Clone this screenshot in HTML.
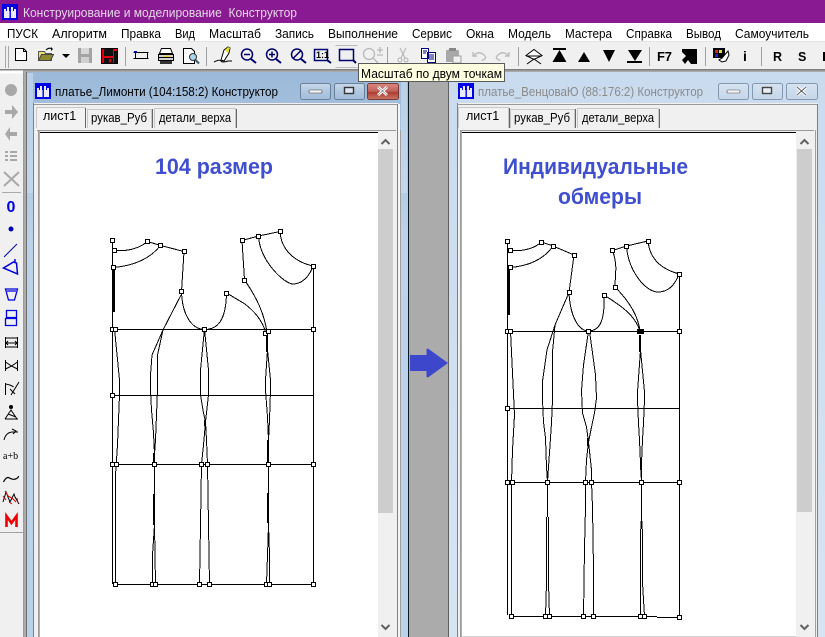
<!DOCTYPE html>
<html><head><meta charset="utf-8"><title>Конструктор</title>
<style>
html,body{margin:0;padding:0;background:#ababab;width:825px;height:637px;overflow:hidden}
svg{display:block;position:absolute;left:0;top:0}
text{font-family:"Liberation Sans","DejaVu Sans",sans-serif;font-size:12.5px;fill:#000}
.h{font-size:22px;font-weight:bold;fill:#3f4fcf}
.g{fill:#8a8a8a}
.p{fill:none;stroke:#000;stroke-width:1}
.sq rect{fill:#fff;stroke:#000;stroke-width:1}
</style></head><body>
<svg width="825" height="637" viewBox="0 0 825 637" xmlns="http://www.w3.org/2000/svg">
<defs>
<linearGradient id="w1" x1="0" y1="0" x2="0" y2="1"><stop offset="0" stop-color="#9cb9d9"/><stop offset=".3" stop-color="#bdd3ea"/><stop offset="1" stop-color="#b9d1ea"/></linearGradient>
<linearGradient id="w2" x1="0" y1="0" x2="0" y2="1"><stop offset="0" stop-color="#c9dbee"/><stop offset="1" stop-color="#d7e4f2"/></linearGradient>
<linearGradient id="rb" x1="0" y1="0" x2="0" y2="1"><stop offset="0" stop-color="#d98a80"/><stop offset=".5" stop-color="#c0605a"/><stop offset=".55" stop-color="#b03c30"/><stop offset="1" stop-color="#c87868"/></linearGradient>
<linearGradient id="bb" x1="0" y1="0" x2="0" y2="1"><stop offset="0" stop-color="#c8d9eb"/><stop offset=".5" stop-color="#b0c7df"/><stop offset="1" stop-color="#a4bedb"/></linearGradient>
<linearGradient id="bc" x1="0" y1="0" x2="0" y2="1"><stop offset="0" stop-color="#d6e3f0"/><stop offset="1" stop-color="#c4d6e9"/></linearGradient>
<g id="app"><rect width="16" height="16" fill="#0000e6"/><path d="M2 14V5h2v2h1V3h2v4h2V3h2v4h1V5h2v9z" fill="#fff" opacity=".92"/><rect x="7.500" y="6" width="1.400" height="8" fill="#0000e6"/></g>
<path id="upa" d="M-4 3L0 -1L4 3" fill="none" stroke="#606060" stroke-width="2"/>
</defs>

<!-- base -->
<rect width="825" height="637" fill="#ababab"/>
<!-- title -->
<rect width="825" height="23" fill="#8a1a92"/>
<use href="#app" x="2" y="4"/>
<text x="23" y="17" style="fill:#e4d6e6" textLength="274" lengthAdjust="spacingAndGlyphs">Конструирование и моделирование&#160;&#160;Конструктор</text>
<!-- menu -->
<rect y="23" width="825" height="18" fill="#fff"/>
<g>
<text x="7" y="38" textLength="31" lengthAdjust="spacingAndGlyphs">ПУСК</text>
<text x="52" y="38" textLength="55" lengthAdjust="spacingAndGlyphs">Алгоритм</text>
<text x="121" y="38" textLength="40" lengthAdjust="spacingAndGlyphs">Правка</text>
<text x="175" y="38" textLength="20" lengthAdjust="spacingAndGlyphs">Вид</text>
<text x="209" y="38" textLength="52" lengthAdjust="spacingAndGlyphs">Масштаб</text>
<text x="275" y="38" textLength="39" lengthAdjust="spacingAndGlyphs">Запись</text>
<text x="328" y="38" textLength="70" lengthAdjust="spacingAndGlyphs">Выполнение</text>
<text x="412" y="38" textLength="40" lengthAdjust="spacingAndGlyphs">Сервис</text>
<text x="466" y="38" textLength="28" lengthAdjust="spacingAndGlyphs">Окна</text>
<text x="508" y="38" textLength="43" lengthAdjust="spacingAndGlyphs">Модель</text>
<text x="565" y="38" textLength="47" lengthAdjust="spacingAndGlyphs">Мастера</text>
<text x="626" y="38" textLength="46" lengthAdjust="spacingAndGlyphs">Справка</text>
<text x="686" y="38" textLength="35" lengthAdjust="spacingAndGlyphs">Вывод</text>
<text x="735" y="38" textLength="74" lengthAdjust="spacingAndGlyphs">Самоучитель</text>
</g>
<!-- toolbar -->
<rect y="41" width="825" height="28" fill="#f0f0f0"/>
<rect y="41" width="825" height="1" fill="#e4e4e4"/>
<rect y="69" width="825" height="1.500" fill="#808080"/>
<rect x="5" y="46" width="1" height="22" fill="#a8a8a8"/><rect x="8" y="46" width="1" height="22" fill="#a8a8a8"/>
<g fill="#a0a0a0"><rect x="125" y="47" width="1" height="19"/><rect x="206" y="47" width="1" height="19"/><rect x="387" y="47" width="1" height="19"/><rect x="518" y="47" width="1" height="19"/><rect x="649" y="47" width="1" height="19"/><rect x="705" y="47" width="1" height="19"/><rect x="761" y="47" width="1" height="19"/></g>
<!-- new -->
<path d="M15.500 48.500h8l3 3v9h-11z" fill="#fff" stroke="#000"/><path d="M23.500 48.500v3h3" fill="none" stroke="#000"/>
<!-- open -->
<path d="M38.500 51.500h6l1 2h6v7h-13z" fill="#e8e070" stroke="#555"/><path d="M38.500 60.500l3-6h12l-3 6z" fill="#8f8a30" stroke="#444"/><path d="M46 50q3-3 6-1" fill="none" stroke="#000"/><path d="M51 47l2 2-2 2z"/>
<path d="M62 54h8l-4 4z" fill="#000"/>
<!-- save disabled -->
<rect x="78" y="48" width="14" height="15" fill="#a4a4a4"/><rect x="81" y="48" width="8" height="6" fill="#d8d8d8"/><rect x="81" y="57" width="8" height="6" fill="#d0d0d0"/>
<!-- save red -->
<rect x="101.500" y="48.500" width="16" height="15" fill="#e00010" stroke="#000"/><rect x="104" y="49" width="9" height="7" fill="#111"/><rect x="104" y="58" width="9" height="5.500" fill="#111"/><rect x="109" y="59" width="2" height="3.500" fill="#d00"/><rect x="114" y="51" width="3" height="12" fill="#111"/>
<!-- page layout -->
<path d="M133.500 52.500h15M135.500 52.500v6M147.500 52.500v6M133.500 58.500h15" fill="none" stroke="#000"/><rect x="134" y="51" width="3" height="1.500" fill="#00c"/><rect x="136" y="54" width="11" height="4" fill="#f0f0f0"/>
<!-- printer -->
<path d="M161.500 48.500h9l2 5h-13z" fill="#fff" stroke="#000"/><path d="M158.500 54.500h15v6h-15z" fill="#d0d0d0" stroke="#000"/><path d="M158.500 57.500h15" stroke="#000"/><rect x="163" y="55.500" width="6" height="1.500" fill="#e8d040"/><path d="M160 61h12v3h-12z" fill="#333"/>
<!-- preview -->
<path d="M183.500 48.500h8l3 3v12h-11z" fill="#fff" stroke="#000"/><circle cx="193" cy="57" r="3.500" fill="#a8d8e8" stroke="#333"/><path d="M195.500 60l3.500 3.500" stroke="#405a70" stroke-width="2"/>
<!-- pen -->
<path d="M221 60l3-10 4-3 2 1-1 5-5 8z" fill="#fff" stroke="#000"/><path d="M225 50l3-3 2 1-2 5z" fill="#e8e020"/><path d="M214 62q6-3 7-1t7 0h4" fill="none" stroke="#000"/>
<!-- zooms -->
<g fill="none" stroke="#00006e" stroke-width="1.500">
<circle cx="247" cy="54.500" r="5.500"/><path d="M244 54.500h6"/>
<circle cx="272" cy="54.500" r="5.500"/><path d="M269 54.500h6M272 51.500v6"/>
<circle cx="297" cy="54.500" r="5.500"/><path d="M293 58.500l8-8"/>
<rect x="314.500" y="49.500" width="13" height="11"/>
<rect x="339.500" y="49.500" width="14" height="11"/>
</g>
<g fill="none" stroke="#00006e" stroke-width="2"><path d="M251 59l5 4M276 59l5 4M301 59l5 4M327 60l4 3M353 60l3 3"/></g>
<text x="316" y="58" style="font-size:9px;font-weight:bold;fill:#000">1:1</text>
<path d="M335.500 45.500h22M335.500 67.500h22" stroke="#bbb" fill="none"/>
<g fill="none" stroke="#b8b8b8" stroke-width="1.300"><circle cx="369" cy="54" r="5.500"/><path d="M373 58l5 5M377 50h6M380 47v6M377 55h6"/></g>
<!-- scissors -->
<g fill="none" stroke="#b0b0b0"><path d="M400 48l5 10M406 48l-5 10"/><circle cx="400" cy="60" r="2"/><circle cx="406" cy="60" r="2"/></g>
<!-- copy -->
<path d="M421.500 48.500h7v10h-7zM427.500 52.500h8v10h-8z" fill="#fff" stroke="#000080"/><path d="M423 51h4M423 53h3M429 55h5M429 57h5M429 59h5" stroke="#000080"/>
<!-- paste -->
<rect x="446" y="50" width="13" height="12" rx="1" fill="#a8a8a8"/><rect x="449" y="48" width="7" height="3" fill="#888"/><rect x="453" y="56" width="8" height="7" fill="#f0f0f0" stroke="#a0a0a0"/>
<!-- undo redo -->
<path d="M473 52v4h4M473.500 55.500q5-5 10-1t-2 6" fill="none" stroke="#bcbcbc" stroke-width="1.400"/>
<path d="M509 52v4h-4M508.500 55.500q-5-5-10-1t2 6" fill="none" stroke="#bcbcbc" stroke-width="1.400"/>
<!-- shape nav -->
<path d="M526 55.500l8-6 8 6-8 4z" fill="#fff" stroke="#000"/><path d="M526 56h16M527 64l7-5 7 5" fill="none" stroke="#000"/>
<path d="M553 48h13v2h-13zM559.500 50l7 12h-14z" fill="#000"/>
<path d="M578 62l6-10 6 10z" fill="#000"/>
<path d="M603 50l6 12 6-12z" fill="#000"/>
<path d="M628 50h14l-7 11zM627 61h15v2h-15z" fill="#000"/>
<text x="657" y="61" style="font-size:13px;font-weight:bold" textLength="15">F7</text>
<path d="M682 49h15v15h-6l-3-4-3 4-3-4 4-4-4-4z" fill="#000"/>
<!-- paint -->
<rect x="713" y="48" width="12" height="10" fill="#000"/><rect x="715" y="50" width="3" height="3" fill="#e02020"/><rect x="719" y="50" width="3" height="3" fill="#e8e020"/><rect x="715" y="54" width="3" height="3" fill="#2020e0"/><path d="M722 58l6-7 1 4-3 6-4 1-3-2z" fill="#fff" stroke="#000"/>
<text x="743" y="61" style="font-size:14px;font-weight:bold">i</text>
<text x="773" y="61" style="font-size:12.5px;font-weight:bold">R</text>
<text x="798" y="61" style="font-size:12.5px;font-weight:bold">S</text>
<rect x="823" y="52" width="2" height="9" fill="#000"/>

<!-- left palette -->
<rect y="70.500" width="23" height="567" fill="#f0f0f0"/>
<rect y="70.500" width="23" height="3" fill="#fff"/>
<rect x="23" y="70" width="1" height="567" fill="#9a9a9a"/>
<circle cx="11" cy="90" r="6" fill="#a8a8a8"/>
<path d="M5 110h7v-5l6 7-6 7v-5h-7z" fill="#a8a8a8"/>
<path d="M17 132h-7v-5l-5 7 5 7v-5h7z" fill="#a8a8a8"/>
<path d="M5 151h3v2h-3zM5 155h3v2h-3zM5 159h3v2h-3zM10 151h7v2h-7zM10 155h7v2h-7zM10 159h7v2h-7z" fill="#a8a8a8"/>
<path d="M4 172l15 14M19 172l-15 14" stroke="#a8a8a8" stroke-width="2" fill="none"/>
<rect x="2" y="192" width="19" height="1" fill="#aaa"/>
<text x="6.500" y="212" style="font-size:16px;font-weight:bold;fill:#0000e0">0</text>
<circle cx="11" cy="229" r="2.500" fill="#0000c0"/>
<path d="M4 257l13-13" stroke="#0000c0" fill="none"/>
<path d="M3.500 268l10-6 3 1 1 11zM15 262v-3" fill="none" stroke="#0000e0" stroke-width="1.500"/>
<path d="M5.500 289h12l-3 11h-6z M7 291h9" fill="none" stroke="#0000e0" stroke-width="1.300"/>
<path d="M6.500 310.500h10v7h-10zM5.500 318.500h11v7h-11z" fill="none" stroke="#0000e0" stroke-width="1.300"/>
<g fill="none" stroke="#000">
<path d="M5.500 337v11M17.500 337v11M6 343h11M6 343l2-2M6 343l2 2M17 343l-2-2M17 343l-2 2M5 338h13M5 347h13" stroke-width="1"/>
<path d="M5.500 360v11M17.500 360v11M5.500 362l6 4 6-4M5.500 369l6-3 6 3"/>
<path d="M5.500 383v12M5.500 384q6 1 8 3M19 382l-8 13M10 389l5 5"/>
<path d="M5 419h13M5 419l6-9 6 9M8 414l8 3M11 406v3"/>
<path d="M4 440q2-8 9-8h5M12 429l4 2-3 3"/>
<path d="M3.500 482q3-6 6-4t6 1 3-3" stroke-width="1.200"/>
</g>
<circle cx="11" cy="407" r="2" fill="#000"/>
<text x="3" y="459" style="font-size:10px;font-family:'Liberation Serif',serif">a+b</text>
<path d="M3 502l3-10 4 10 4-8 1 3 4 7" fill="none" stroke="#000"/>
<path d="M5 491l3 5 4 2 4 4M3 496l3 4M9 502l3 2M17 498l1 5" fill="none" stroke="#e00000"/>
<path d="M6.500 527v-11l5 7 5-7v11" fill="none" stroke="#f00000" stroke-width="2.600"/>
<rect x="0" y="532" width="23" height="1" fill="#a0a0a0"/>

<!-- window 1 -->
<rect x="26" y="72" width="383" height="565" fill="url(#w1)"/>
<rect x="26" y="72" width="1" height="565" fill="#707070"/>
<rect x="27" y="73" width="6" height="120" fill="#cddff0" opacity=".6"/>
<rect x="401" y="73" width="6" height="120" fill="#cddff0" opacity=".6"/>
<rect x="408" y="72" width="1" height="565" fill="#0a1a24"/>
<use href="#app" x="35" y="83"/>
<text x="55" y="96" textLength="223" lengthAdjust="spacingAndGlyphs">платье_Лимонти (104:158:2) Конструктор</text>
<rect x="300.500" y="83.500" width="30" height="16" rx="2" fill="url(#bb)" stroke="#6a7f98"/>
<rect x="309" y="90" width="13" height="3" rx="1" fill="#f4f4f4" stroke="#444" stroke-width=".6"/>
<rect x="334.500" y="83.500" width="30" height="16" rx="2" fill="url(#bb)" stroke="#6a7f98"/>
<rect x="344.500" y="87.500" width="9" height="6" fill="#dde6f4" stroke="#333" stroke-width="1.400"/>
<rect x="367.500" y="83.500" width="31" height="16" rx="2" fill="url(#rb)" stroke="#7a3a34"/>
<path d="M378 87l9 8M387 87l-9 8" stroke="#fff" stroke-width="2.800"/>
<path d="M378 87l9 8M387 87l-9 8" stroke="#333" stroke-width=".5"/>

<rect x="34" y="103" width="364" height="534" fill="#f0f0f0"/>
<rect x="33" y="103" width="1" height="534" fill="#808080"/>
<rect x="34" y="104" width="364" height="1" fill="#9a9a9a"/>
<rect x="397" y="104" width="1" height="533" fill="#808080"/>
<rect x="400" y="130" width="1" height="507" fill="#a0a0a0"/>
<rect x="398" y="104" width="2" height="533" fill="#f6f6f6"/>
<!-- tabs 1 -->
<path d="M36.500 128V107.500h49V128" fill="#f2f2f2" stroke="#c8c8c8"/><rect x="85" y="108" width="1" height="20" fill="#666"/>
<text x="43" y="120">лист1</text>
<path d="M87.500 128V109.500h64V128" fill="#f0f0f0" stroke="#c8c8c8"/><rect x="152" y="109" width="1" height="19" fill="#666"/>
<text x="91" y="122" textLength="56" lengthAdjust="spacingAndGlyphs">рукав_Руб</text>
<path d="M154.500 128V108.500h81V128" fill="#f0f0f0" stroke="#c8c8c8"/><rect x="236" y="109" width="1" height="19" fill="#666"/>
<text x="159" y="122" textLength="72" lengthAdjust="spacingAndGlyphs">детали_верха</text>
<rect x="35" y="128" width="51" height="2" fill="#f2f2f2"/>
<rect x="37" y="130" width="359" height="1" fill="#999"/>
<rect x="38" y="130" width="1" height="507" fill="#999"/>
<rect x="39" y="131" width="1" height="506" fill="#b0b0b0"/>
<rect x="40" y="132" width="338" height="505" fill="#fff"/>
<rect x="40" y="132" width="338" height="1" fill="#000"/>
<rect x="378" y="132" width="18" height="505" fill="#f0f0f0"/>
<rect x="378" y="149" width="15" height="364" fill="#cdcdcd"/>
<use href="#upa" x="385.500" y="141"/>
<use href="#upa" transform="translate(385.500 628) scale(1 -1)"/>

<!-- window 2 -->
<rect x="448" y="72" width="377" height="565" fill="url(#w2)"/>
<rect x="448" y="72" width="1" height="565" fill="#606060"/>
<use href="#app" x="458" y="83"/>
<text x="478" y="96" class="g" textLength="225" lengthAdjust="spacingAndGlyphs">платье_ВенцоваЮ (88:176:2) Конструктор</text>
<rect x="718.500" y="83.500" width="30" height="16" rx="2" fill="url(#bc)" stroke="#8498b0"/>
<rect x="727" y="90" width="13" height="3" rx="1" fill="#f4f4f4" stroke="#555" stroke-width=".6"/>
<rect x="752.500" y="83.500" width="30" height="16" rx="2" fill="url(#bc)" stroke="#8498b0"/>
<rect x="762.500" y="87.500" width="9" height="6" fill="#e6eef6" stroke="#444" stroke-width="1.400"/>
<rect x="786.500" y="83.500" width="31" height="16" rx="2" fill="url(#bc)" stroke="#8498b0"/>
<path d="M797 87l9 8M806 87l-9 8" stroke="#fff" stroke-width="3"/>
<path d="M797 87l9 8M806 87l-9 8" stroke="#555" stroke-width=".9"/>

<rect x="457" y="103" width="361" height="534" fill="#f0f0f0"/>
<rect x="457" y="103" width="1" height="534" fill="#808080"/>
<rect x="457" y="104" width="361" height="1" fill="#9a9a9a"/>
<rect x="817" y="104" width="1" height="533" fill="#808080"/>
<rect x="815" y="130" width="1" height="507" fill="#a0a0a0"/>
<!-- tabs 2 -->
<path d="M458.500 128V107.500h50V128" fill="#f2f2f2" stroke="#c8c8c8"/><rect x="509" y="108" width="1" height="20" fill="#666"/>
<text x="466" y="120">лист1</text>
<path d="M510.500 128V109.500h64V128" fill="#f0f0f0" stroke="#c8c8c8"/><rect x="575" y="109" width="1" height="19" fill="#666"/>
<text x="514" y="122" textLength="56" lengthAdjust="spacingAndGlyphs">рукав_Руб</text>
<path d="M577.500 128V108.500h81V128" fill="#f0f0f0" stroke="#c8c8c8"/><rect x="659" y="109" width="1" height="19" fill="#666"/>
<text x="582" y="122" textLength="72" lengthAdjust="spacingAndGlyphs">детали_верха</text>
<rect x="459" y="128" width="50" height="2" fill="#f2f2f2"/>
<rect x="460" y="130" width="354" height="1" fill="#999"/>
<rect x="460" y="130" width="1" height="507" fill="#999"/>
<rect x="461" y="131" width="1" height="506" fill="#b0b0b0"/>
<rect x="462" y="132" width="334" height="505" fill="#fff"/>
<rect x="462" y="132" width="334" height="1" fill="#000"/>
<rect x="796" y="132" width="18" height="505" fill="#f0f0f0"/>
<rect x="797" y="149" width="15" height="363" fill="#cdcdcd"/>
<use href="#upa" x="804.500" y="141"/>
<use href="#upa" transform="translate(804.500 628) scale(1 -1)"/>
<rect x="462" y="636" width="334" height="1" fill="#d0d0d0"/>

<!-- arrow -->
<path d="M410 355h16.500v-6l1.500-.5 20 14.500-20 14.500-1.500-.5v-6h-16.500z" fill="#3d47cc"/>

<!-- headings -->
<text x="155" y="174" class="h" textLength="118" lengthAdjust="spacingAndGlyphs">104 размер</text>
<text x="503" y="174" class="h" textLength="185" lengthAdjust="spacingAndGlyphs">Индивидуальные</text>
<text x="558" y="204" class="h" textLength="84" lengthAdjust="spacingAndGlyphs">обмеры</text>

<!-- pattern 1 -->
<g class="p" shape-rendering="crispEdges">
<path d="M112.500 240V584M313.500 266V584M113 329.500H313M113 395.500H313M113 464.500H313M115 584.500H313"/>
<path d="M114.500 250.500Q135 252 147.500 241.500L160.500 245.500L184 251.500L181.500 291.500"/>
<path d="M113 267.500Q145 265 160.500 245.500"/>
<path d="M181.500 291.500C182 312 190 329 204.500 329.500C218 329.500 226 320 226.500 293L245 304C255 312 262 320 266 333"/>
<path d="M244.500 280C256 296 265 315 267 333M242 240.500L244.500 280M242 240.500L258.500 236L280 231.500"/>
<path d="M280 231.500C281 250 295 262 313 266M258.500 236C260 262 285 284 293 284C303 284 310 275 313 266"/>
<path d="M114.500 329L119.500 380V395L117.500 445L115.500 475V584"/>
<path d="M181 295L163 330L152 355L150.500 375V390L151.500 410L153.500 433L154.500 454V494"/>
<path d="M163 330L157.500 355V390L156.500 415L155.500 440L154.500 454"/>
<path d="M154.500 525L152.500 555V584M154.500 525L155.500 584M154.500 494V525"/>
<path d="M204.500 329L200.500 370V395L203.500 413L205.500 422L206.500 440L207.500 464L208.500 525L209.500 584"/>
<path d="M204.500 329L208.500 370V395L205.500 422L203.500 445L201.500 464L200.500 525L199.500 584"/>
<path d="M267.500 350L265.500 380V390L267.500 417L268.500 440V525L267.500 555L266.500 584"/>
<path d="M267.500 350L270.500 380V390L269.500 420L268.500 440V525L269.500 555L269.500 584"/>
</g>
<g fill="#000" shape-rendering="crispEdges">
<rect x="113" y="267" width="2" height="45"/>
<rect x="153" y="453" width="2" height="11"/><rect x="153" y="494" width="2" height="31"/>
<rect x="266" y="335" width="2" height="17"/><rect x="267" y="440" width="2" height="24"/><rect x="267" y="493" width="2" height="30"/>
<rect x="204" y="420" width="2" height="6"/>
</g>
<g class="sq" shape-rendering="crispEdges">
<rect x="110.500" y="238.500" width="4" height="4"/><rect x="112.500" y="248.500" width="4" height="4"/><rect x="111.500" y="265.500" width="4" height="4"/><rect x="145.500" y="239.500" width="4" height="4"/><rect x="158.500" y="243.500" width="4" height="4"/><rect x="182.500" y="249.500" width="4" height="4"/><rect x="179.500" y="289.500" width="4" height="4"/><rect x="240.500" y="238.500" width="4" height="4"/><rect x="256.500" y="234.500" width="4" height="4"/><rect x="278.500" y="229.500" width="4" height="4" stroke-width="1.600"/><rect x="311.500" y="264.500" width="4" height="4"/><rect x="242.500" y="278.500" width="4" height="4"/><rect x="224.500" y="291.500" width="4" height="4"/><rect x="110.500" y="327.500" width="4" height="4"/><rect x="113.500" y="327.500" width="4" height="4"/><rect x="202.500" y="327.500" width="4" height="4"/><rect x="263.500" y="331.500" width="4" height="4"/><rect x="266.500" y="329.500" width="4" height="4"/><rect x="311.500" y="327.500" width="4" height="4"/><rect x="110.500" y="393.500" width="4" height="4"/>
<rect x="110.500" y="462.500" width="4" height="4"/><rect x="114.500" y="462.500" width="4" height="4"/><rect x="152.500" y="462.500" width="4" height="4"/><rect x="199.500" y="462.500" width="4" height="4"/><rect x="205.500" y="462.500" width="4" height="4"/><rect x="266.500" y="462.500" width="4" height="4"/><rect x="311.500" y="462.500" width="4" height="4"/>
<rect x="113.500" y="582.500" width="4" height="4"/><rect x="150.500" y="582.500" width="4" height="4"/><rect x="153.500" y="582.500" width="4" height="4"/><rect x="197.500" y="582.500" width="4" height="4"/><rect x="207.500" y="582.500" width="4" height="4"/><rect x="264.500" y="582.500" width="4" height="4"/><rect x="267.500" y="582.500" width="4" height="4"/><rect x="311.500" y="582.500" width="4" height="4"/>
</g>

<!-- pattern 2 -->
<g class="p" shape-rendering="crispEdges">
<path d="M507.500 241V615M679.500 274V617M508 331.500H679M508 408.500H679M508 482.500H679M511 616.500H657M657 617.500H679"/>
<path d="M510 250.500Q530 252 541.500 242L553 246L574 255L569 292.500"/>
<path d="M510 267.500Q540 265 553 246"/>
<path d="M569 292.500C570 315 578 331 588.500 331C600 331 605 320 604 295C620 305 635 315 640 331"/>
<path d="M615 287C628 300 638 315 640 331M612.500 250.500C618 265 615 275 615 287M612.500 250.500L626.500 246L648 241"/>
<path d="M648 241C650 262 665 270 679 274M626.500 246C628 270 645 292 658 292C668 292 675 285 679 274"/>
<path d="M510.500 331L514.500 415L512.500 450L511.500 482V616"/>
<path d="M569 292.500L555 325L547 350L542.500 381V400L543.500 422L545.500 438L546.500 467L547.500 482"/>
<path d="M569 292.500L555 325L552.500 352V400L551.500 423L550.500 438L548.500 467L547.500 482V517"/>
<path d="M546.500 517V583L545.500 616M548.500 517V583L549.500 616"/>
<path d="M588.500 331L583.500 365L581.500 391L582.500 413L586.500 427L588.500 442L591.500 470V482L592.500 507L593.500 569V616"/>
<path d="M589.500 331L595.500 375L596.500 398L594.500 413L591.500 427L588.500 442L586.500 460L585.500 482V507L584.500 548L583.500 616"/>
<path d="M640.500 350L637.500 392V400L638.500 423L639.500 440L640.500 463L641.500 482V517L640.500 533V583V616"/>
<path d="M640.500 350L644.500 392V400L643.500 423L642.500 440L641.500 463V517L642.500 533V583L644.500 616"/>
</g>
<g fill="#000" shape-rendering="crispEdges">
<rect x="508" y="267" width="2" height="48"/>
<rect x="639" y="335" width="2" height="17"/>
<rect x="640" y="460" width="2" height="10"/>
<rect x="587" y="438" width="2" height="8"/>
</g>
<g class="sq" shape-rendering="crispEdges">
<rect x="505.500" y="239.500" width="4" height="4"/><rect x="508.500" y="248.500" width="4" height="4"/><rect x="508.500" y="265.500" width="4" height="4"/><rect x="539.500" y="240.500" width="4" height="4"/><rect x="551.500" y="244.500" width="4" height="4"/><rect x="572.500" y="253.500" width="4" height="4"/><rect x="567.500" y="290.500" width="4" height="4"/><rect x="610.500" y="248.500" width="4" height="4"/><rect x="624.500" y="244.500" width="4" height="4"/><rect x="646.500" y="239.500" width="4" height="4" stroke-width="1.600"/><rect x="677.500" y="272.500" width="4" height="4"/><rect x="613.500" y="285.500" width="4" height="4"/><rect x="602.500" y="293.500" width="4" height="4"/><rect x="505.500" y="329.500" width="4" height="4"/><rect x="508.500" y="329.500" width="4" height="4"/><rect x="586.500" y="329.500" width="4" height="4"/><rect x="677.500" y="329.500" width="4" height="4"/><rect x="505.500" y="406.500" width="4" height="4"/>
<rect x="505.500" y="480.500" width="4" height="4"/><rect x="510.500" y="480.500" width="4" height="4"/><rect x="545.500" y="480.500" width="4" height="4"/><rect x="583.500" y="480.500" width="4" height="4"/><rect x="589.500" y="480.500" width="4" height="4"/><rect x="639.500" y="480.500" width="4" height="4"/><rect x="677.500" y="480.500" width="4" height="4"/>
<rect x="509.500" y="614.500" width="4" height="4"/><rect x="543.500" y="614.500" width="4" height="4"/><rect x="547.500" y="614.500" width="4" height="4"/><rect x="581.500" y="614.500" width="4" height="4"/><rect x="591.500" y="614.500" width="4" height="4"/><rect x="638.500" y="614.500" width="4" height="4"/><rect x="642.500" y="614.500" width="4" height="4"/><rect x="677.500" y="615.500" width="4" height="4"/>
</g>
<rect x="637" y="329" width="7" height="5" fill="#000"/>

<!-- tooltip -->
<rect x="358.500" y="63.500" width="146" height="18" fill="#ffffe1" stroke="#5a5a5a"/>
<text x="361" y="78" textLength="141" lengthAdjust="spacingAndGlyphs">Масштаб по двум точкам</text>
</svg>
</body></html>
